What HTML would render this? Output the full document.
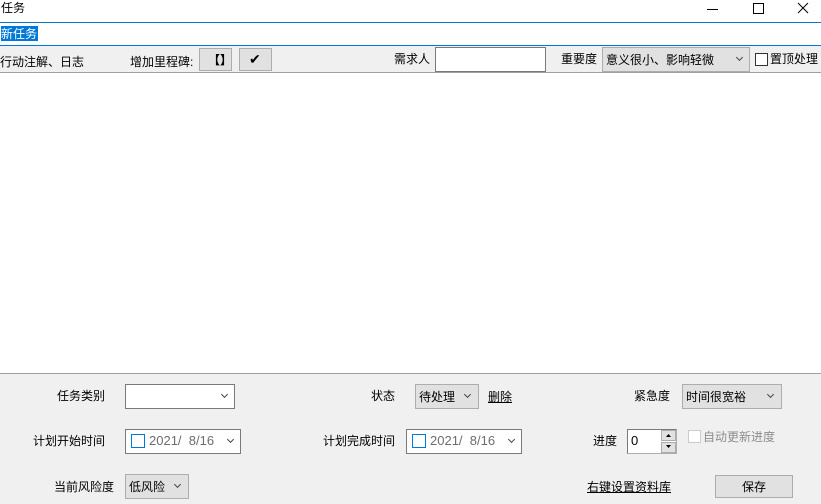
<!DOCTYPE html>
<html><head><meta charset="utf-8"><style>
*{margin:0;padding:0;box-sizing:border-box}
body{width:821px;height:504px;overflow:hidden;background:#fff;font-family:"Liberation Sans","Microsoft YaHei","Noto Sans CJK SC",sans-serif;font-size:12px;color:#000;position:relative}
.a{position:absolute}
.t{position:absolute;line-height:14px;white-space:nowrap}
.cb{position:absolute;background:#e1e1e1;border:1px solid #adadad}
.wb{position:absolute;background:#fff;border:1px solid #7a7a7a}
.chev{position:absolute;width:6px;height:6px;border-right:1px solid #444;border-bottom:1px solid #444;transform:rotate(45deg)}
</style></head><body>
<div class="t" style="left:1px;top:1px">任务</div>
<svg class="a" style="left:705px;top:0" width="116" height="20"><line x1="2" y1="9.5" x2="13" y2="9.5" stroke="#000"/><rect x="48.5" y="3.5" width="10" height="10" fill="none" stroke="#000"/><path d="M93 3l10 10M103 3l-10 10" stroke="#000"/></svg>
<div class="a" style="left:0;top:22px;width:821px;height:1px;background:#0078d7"></div>
<div class="a" style="left:1px;top:26px;width:37px;height:15px;background:#0078d7"></div>
<div class="t" style="left:1px;top:27px;color:#fff">新任务</div>
<div class="a" style="left:0;top:45px;width:821px;height:28px;background:#f0f0f0;border-top:1px solid #0078d7;border-bottom:1px solid #a0a0a0"></div>
<div class="t" style="left:0;top:55px">行动注解、日志</div>
<div class="t" style="left:130px;top:55px">增加里程碑:</div>
<div class="cb" style="left:199px;top:48px;width:33px;height:23px"></div>
<div class="t" style="left:208px;top:53px;font-weight:bold">【】</div>
<div class="cb" style="left:239px;top:48px;width:33px;height:23px"></div>
<div class="t" style="left:249px;top:52px;font-size:14px">✔</div>
<div class="t" style="left:394px;top:52px">需求人</div>
<div class="wb" style="left:435px;top:47px;width:111px;height:25px"></div>
<div class="t" style="left:561px;top:52px">重要度</div>
<div class="cb" style="left:602px;top:47px;width:148px;height:25px"></div>
<div class="t" style="left:606px;top:53px">意义很小、影响轻微</div>
<div class="chev" style="left:737px;top:55px;width:5px;height:5px"></div>
<div class="a" style="left:755px;top:53px;width:13px;height:13px;border:1px solid #333;background:#fff"></div>
<div class="t" style="left:770px;top:52px">置顶处理</div>

<div class="a" style="left:0;top:373px;width:821px;height:131px;background:#f0f0f0;border-top:1px solid #a0a0a0"></div>
<div class="t" style="left:57px;top:389px">任务类别</div>
<div class="wb" style="left:125px;top:384px;width:110px;height:25px"></div>
<div class="chev" style="left:222px;top:392px;width:5px;height:5px"></div>
<div class="t" style="left:371px;top:389px">状态</div>
<div class="cb" style="left:415px;top:384px;width:64px;height:25px"></div>
<div class="t" style="left:419px;top:390px">待处理</div>
<div class="chev" style="left:465px;top:392px;width:5px;height:5px"></div>
<div class="t" style="left:488px;top:390px;text-decoration:underline">删除</div>
<div class="t" style="left:634px;top:389px">紧急度</div>
<div class="cb" style="left:682px;top:384px;width:100px;height:25px"></div>
<div class="t" style="left:686px;top:390px">时间很宽裕</div>
<div class="chev" style="left:768px;top:392px;width:5px;height:5px"></div>

<div class="t" style="left:33px;top:434px">计划开始时间</div>
<div class="wb" style="left:125px;top:429px;width:116px;height:25px"></div>
<div class="a" style="left:131px;top:434px;width:14px;height:14px;border:1px solid #0078d7"></div>
<div class="t" style="left:149px;top:434px;color:#6d6d6d;font-size:13px">2021/&nbsp; 8/16</div>
<div class="chev" style="left:228px;top:437px;width:5px;height:5px"></div>
<div class="t" style="left:323px;top:434px">计划完成时间</div>
<div class="wb" style="left:406px;top:429px;width:116px;height:25px"></div>
<div class="a" style="left:412px;top:434px;width:14px;height:14px;border:1px solid #0078d7"></div>
<div class="t" style="left:430px;top:434px;color:#6d6d6d;font-size:13px">2021/&nbsp; 8/16</div>
<div class="chev" style="left:509px;top:437px;width:5px;height:5px"></div>
<div class="t" style="left:593px;top:434px">进度</div>
<div class="wb" style="left:627px;top:429px;width:50px;height:25px;border-color:#7a7a7a #adadad #adadad #7a7a7a"></div>
<div class="t" style="left:631px;top:434px;font-size:13px">0</div>
<div class="cb" style="left:661px;top:430px;width:15px;height:11px"></div>
<div class="cb" style="left:661px;top:442px;width:15px;height:11px"></div>
<svg class="a" style="left:661px;top:430px" width="15" height="23"><path d="M5 7h5L7.5 4z M5 15h5l-2.5 3z" fill="#000"/></svg>
<div class="a" style="left:688px;top:430px;width:13px;height:13px;border:1px solid #ccc;background:#fff"></div>
<div class="t" style="left:703px;top:430px;color:#8d8d8d">自动更新进度</div>

<div class="t" style="left:54px;top:480px">当前风险度</div>
<div class="cb" style="left:125px;top:474px;width:64px;height:25px"></div>
<div class="t" style="left:129px;top:480px">低风险</div>
<div class="chev" style="left:175px;top:482px;width:5px;height:5px"></div>
<div class="t" style="left:587px;top:480px;text-decoration:underline">右键设置资料库</div>
<div class="cb" style="left:715px;top:475px;width:78px;height:23px"></div>
<div class="t" style="left:742px;top:480px">保存</div>
</body></html>
